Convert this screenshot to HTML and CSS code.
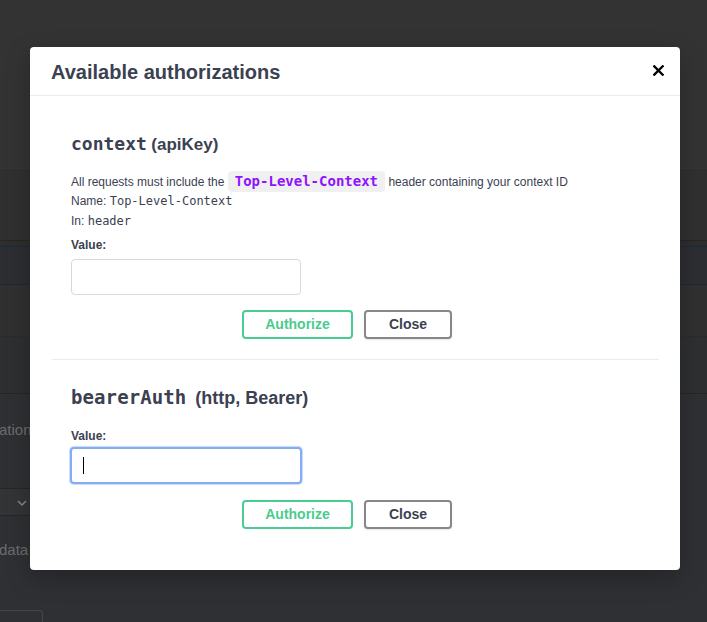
FILE: index.html
```html
<!DOCTYPE html>
<html lang="en">
<head>
<meta charset="utf-8">
<title>Available authorizations</title>
<link rel="stylesheet" href="styles.css">
</head>
<body>
<div class="page">
  <div class="band band-top"></div>
  <div class="band band-a"></div>
  <div class="band band-b"></div>
  <div class="band band-c"></div>
  <div class="band band-d"></div>
  <div class="band band-e">
    <div class="bg-text bg-ation">ation</div>
    <div class="bg-select">
      <svg class="bg-chev" width="10" height="6" viewBox="0 0 10 6"><path d="M1 1 L5 5 L9 1" fill="none" stroke="#8a8a8a" stroke-width="1.4"/></svg>
    </div>
    <div class="bg-text bg-data">data</div>
    <div class="bg-btn"></div>
  </div>
</div>

<div class="modal">
  <div class="modal-header">
    <h3 class="modal-title">Available authorizations</h3>
    <button class="modal-x" aria-label="Close">
      <svg width="11" height="11" viewBox="0 0 11 11"><path d="M1.3 1.3 L9.7 9.7 M9.7 1.3 L1.3 9.7" stroke="#000" stroke-width="2.3" stroke-linecap="square"/></svg>
    </button>
  </div>
  <div class="modal-body">
    <section class="auth auth-first">
      <h4 class="auth-title"><code class="auth-name">context</code> <span class="auth-type">(apiKey)</span></h4>
      <div class="desc">
        <p class="row">All requests must include the <code class="pill">Top-Level-Context</code> header containing your context ID</p>
        <p class="row">Name: <code class="mono">Top-Level-Context</code></p>
        <p class="row">In: <code class="mono">header</code></p>
      </div>
      <label class="value-label">Value:</label>
      <input class="value-input" type="text">
      <div class="btn-row">
        <button class="btn btn-auth">Authorize</button>
        <button class="btn btn-close">Close</button>
      </div>
    </section>
    <section class="auth auth-second">
      <h4 class="auth-title"><code class="auth-name auth-name-b">bearerAuth</code>&nbsp; <span class="auth-type auth-type-b">(http, Bearer)</span></h4>
      <label class="value-label value-label-b">Value:</label>
      <div class="value-input value-focus"><span class="caret"></span></div>
      <div class="btn-row btn-row-b">
        <button class="btn btn-auth">Authorize</button>
        <button class="btn btn-close">Close</button>
      </div>
    </section>
  </div>
</div>
</body>
</html>
```

FILE: styles.css
```css
* { box-sizing: border-box; }
html, body { margin: 0; padding: 0; }
body {
  width: 707px;
  height: 622px;
  overflow: hidden;
  background: #2f3033;
  font-family: "Liberation Sans", Arial, sans-serif;
  position: relative;
}
.page { width: 707px; height: 622px; overflow: hidden; }
.band { width: 100%; }
.band-top { height: 168px; background: #333333; }
.band-a { height: 72px; background: #303030; border-top: 1px solid #363636; }
.band-b { height: 45px; background: #2d2e31; border-top: 1px solid #262626; border-bottom: 1px solid #1b2a3a; box-shadow: inset 0 5px 0 #2e2e2e, inset 0 6px 0 #1b2a3a; }
.band-c { height: 51px; background: #303030; }
.band-d { height: 58px; background: #2e2f31; border-top: 1px solid #2c2c2e; border-bottom: 1px solid #262626; }
.band-e { height: 228px; background: #2f3033; display: flex; flex-direction: column; }
.band-e > * { flex-shrink: 0; }
.bg-text { color: #6b6c6f; font-size: 15px; line-height: 20px; height: 20px; white-space: nowrap; padding-left: 0; }
.bg-ation { margin-top: 26px; margin-left: -1px; }
.bg-select { margin-top: 48px; width: 30px; height: 28px; border-top: 1px solid #262626; border-bottom: 1px solid #262626; background: #333436; position: relative; }
.bg-chev { position: absolute; left: 17px; top: 11px; }
.bg-data { margin-top: 24px; margin-left: -1px; }
.bg-btn { margin-top: 50px; width: 47px; height: 12px; border: 1px solid #45464a; border-bottom: 0; border-radius: 4px 4px 0 0; margin-left: -4px; }

.modal {
  position: absolute;
  left: 30px;
  top: 47px;
  width: 650px;
  height: 523px;
  background: #fff;
  border-radius: 4px;
  box-shadow: 0 8px 24px rgba(0,0,0,0.25);
  color: #3b4151;
}
.modal-header {
  height: 49px;
  padding: 0 16px 0 21px;
  display: flex;
  align-items: center;
  justify-content: space-between;
  border-bottom: 1px solid #ebebeb;
}
.modal-title {
  margin: 0;
  font-size: 20px;
  font-weight: bold;
  color: #3b4151;
  line-height: 24px;
  padding-top: 2px;
}
.modal-x {
  border: 0;
  background: none;
  padding: 0;
  width: 11px;
  height: 11px;
  margin-top: -1px;
  display: block;
}
.modal-x svg { display: block; }
.modal-body { padding: 0 21px 0 22px; }
.auth { padding: 0 19px; }
.auth-first { padding-top: 37px; padding-bottom: 20px; border-bottom: 1px solid #ebebeb; }
.auth-second { padding-top: 26px; }
.auth-title {
  margin: 0;
  height: 22px;
  line-height: 22px;
  font-weight: bold;
  white-space: nowrap;
}
.auth-name {
  font-family: "DejaVu Sans Mono", monospace;
  font-size: 18px;
  font-weight: bold;
  color: #3b4151;
}
.auth-name-b { font-size: 19px; letter-spacing: 0.1px; }
.auth-type { font-size: 17px; }
.auth-type-b { font-size: 18px; }
.desc { margin-top: 16px; }
.row {
  margin: 0;
  font-size: 12px;
  line-height: 20px;
  height: 20px;
  white-space: nowrap;
}
.pill {
  font-family: "DejaVu Sans Mono", monospace;
  font-size: 14px;
  font-weight: bold;
  color: #9012fe;
  background: #f0f0f0;
  border-radius: 4px;
  padding: 2px 7px 3px;
  margin: 0;
}
.mono {
  font-family: "DejaVu Sans Mono", monospace;
  font-size: 12px;
  color: #3b4151;
}
.value-label {
  display: block;
  margin-top: 6px;
  font-size: 12px;
  font-weight: bold;
  line-height: 16px;
  height: 16px;
}
.value-input {
  display: block;
  margin-top: 6px;
  width: 230px;
  height: 36px;
  border: 1px solid #d9d9d9;
  border-radius: 4px;
  background: #fff;
  outline: none;
  padding: 0 10px;
}
.value-label-b { margin-top: 20px; }
.value-focus {
  margin-top: 3px;
  margin-left: -1px;
  width: 232px;
  height: 37px;
  border: 2px solid #84acf3;
  box-shadow: 0 0 1px 1px rgba(132,172,243,0.45);
  border-radius: 4px;
  position: relative;
  padding: 0;
}
.caret {
  position: absolute;
  left: 11px;
  top: 8px;
  width: 1px;
  height: 17px;
  background: #000;
}
.btn-row {
  display: flex;
  justify-content: center;
  gap: 11px;
  margin-top: 15px;
  padding-right: 17px;
}
.btn-row-b { margin-top: 16px; }
.btn {
  height: 29px;
  border-radius: 4px;
  background: #fff;
  font-family: "Liberation Sans", Arial, sans-serif;
  font-size: 14px;
  font-weight: bold;
  padding: 0;
  line-height: 25px;
}
.btn-auth {
  width: 111px;
  border: 2px solid #49cc90;
  color: #49cc90;
}
.btn-close {
  width: 88px;
  border: 2px solid #888;
  color: #3b4151;
  box-shadow: 0 1px 2px rgba(0,0,0,0.1);
}
```
